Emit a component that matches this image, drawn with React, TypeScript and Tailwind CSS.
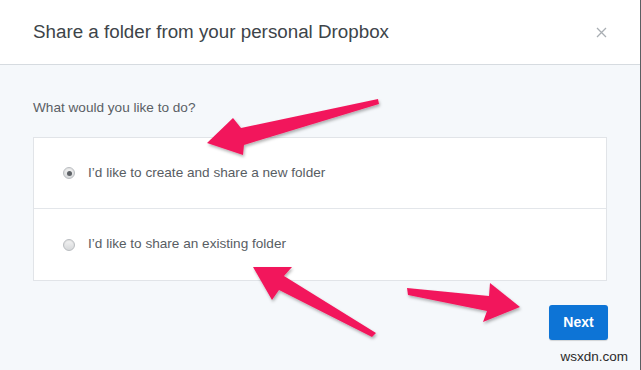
import React from 'react';

const Radio = ({checked}: {checked?: boolean}) => (
  <span className="flex items-center justify-center w-[12px] h-[12px] rounded-full border border-[#b9bcc0] bg-gradient-to-b from-[#f4f4f4] to-[#d6d8da] shadow-[inset_0_1px_1px_rgba(0,0,0,0.08)]">
    {checked && <span className="w-[5px] h-[5px] rounded-full bg-[#5d6166]" />}
  </span>
);

const Option = ({label, checked, last}: {label: string; checked?: boolean; last?: boolean}) => (
  <div className={`flex items-center gap-[13px] h-[71px] pl-[29px] ${last ? '' : 'border-b border-[#e3e6ea]'}`}>
    <Radio checked={checked} />
    <span className="text-[13.6px] text-[#585d63]">{label}</span>
  </div>
);

const Arrows = () => (
  <svg className="absolute inset-0 pointer-events-none" width="641" height="370" viewBox="0 0 641 370">
    <defs>
      <filter id="sh" x="-10%" y="-10%" width="120%" height="130%">
        <feDropShadow dx="1" dy="2" stdDeviation="1.5" floodColor="#000" floodOpacity="0.3" />
      </filter>
    </defs>
    <g fill="#f2185c" filter="url(#sh)">
      <polygon points="378,99 241,128 233,118 207,143 243,155 244,145 379,104" />
      <polygon points="253,267 292,267 284,276 376,333 372,337 279,290 272,300" />
      <polygon points="407,288 489,296 490,283 520,307 483,322 487,311 408,295" />
    </g>
  </svg>
);

export default function App() {
  return (
    <div
      className="relative w-[641px] h-[370px] overflow-hidden bg-[#f5f8fb] border-r border-[#5b5e62]"
      style={{fontFamily: '"Liberation Sans", Arial, sans-serif'}}
    >
      <header className="flex items-center justify-between h-[65px] bg-white border-b border-[#d6dbe0] pl-[33px] pr-[33px]">
        <h1 className="text-[18.8px] text-[#3d4449]">Share a folder from your personal Dropbox</h1>
        <svg width="11" height="11" viewBox="0 0 11 11" className="mt-[1px]">
          <path d="M1 1L10 10M10 1L1 10" stroke="#a9aeb3" strokeWidth="1.3" />
        </svg>
      </header>
      <main className="flex flex-col px-[33px] pt-[34px]">
        <p className="text-[13.6px] text-[#5a5f65] leading-[18px]">What would you like to do?</p>
        <div className="mt-[20px] bg-white border border-[#e1e4e8]">
          <Option label="I’d like to create and share a new folder" checked />
          <Option label="I’d like to share an existing folder" last />
        </div>
        <div className="flex justify-end mt-[24px] -mr-[1px]">
          <button className="w-[59px] h-[35px] rounded-[3px] bg-[#0d74d6] text-white font-bold text-[14px] shadow-[0_1px_1px_rgba(0,0,0,0.15)]">
            Next
          </button>
        </div>
      </main>
      <Arrows />
      <span className="absolute right-[12px] bottom-[3px] text-[13.5px] text-[#2a2a2a]">wsxdn.com</span>
    </div>
  );
}
